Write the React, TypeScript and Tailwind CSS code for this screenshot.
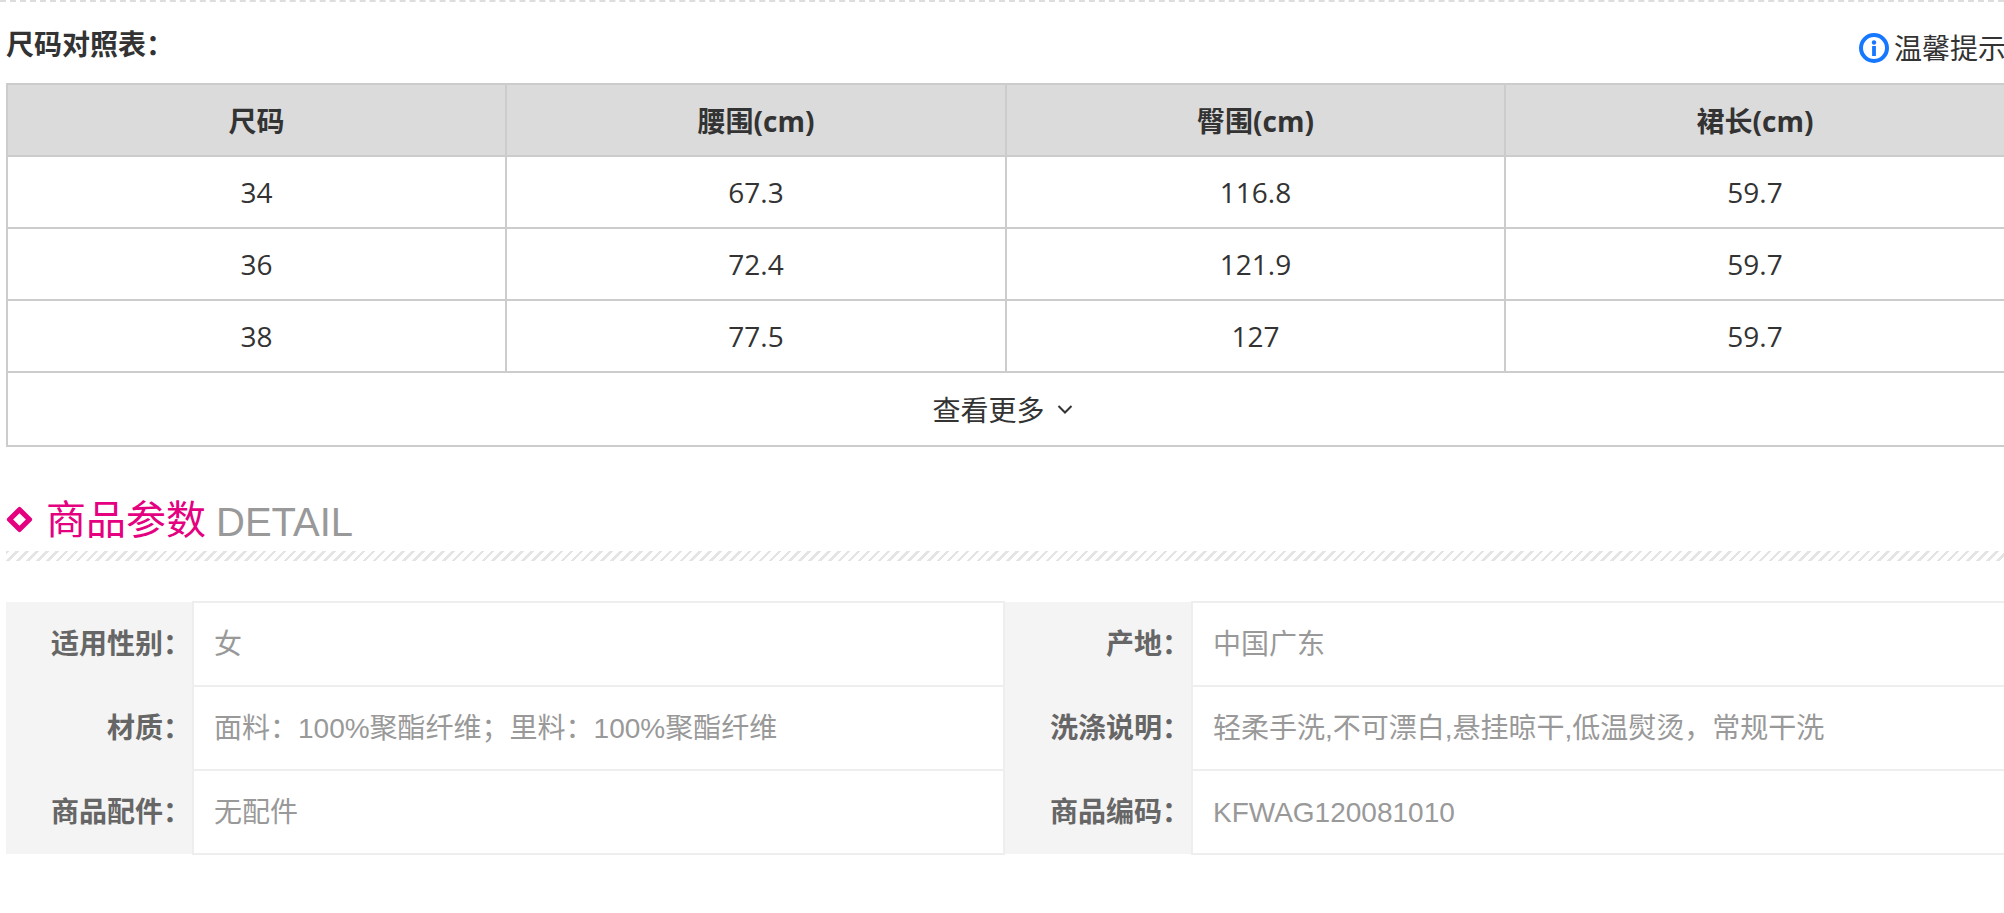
import React from 'react';

const sizeRows = [
  ['34', '67.3', '116.8', '59.7'],
  ['36', '72.4', '121.9', '59.7'],
  ['38', '77.5', '127', '59.7'],
];

const params = [
  ['适用性别：', '女', '产地：', '中国广东'],
  ['材质：', '面料：100%聚酯纤维；里料：100%聚酯纤维', '洗涤说明：', '轻柔手洗,不可漂白,悬挂晾干,低温熨烫，常规干洗'],
  ['商品配件：', '无配件', '商品编码：', 'KFWAG120081010'],
];

function InfoIcon() {
  return (
    <svg width="30" height="30" viewBox="0 0 30 30" className="shrink-0">
      <circle cx="15" cy="15" r="13" fill="none" stroke="#1677ff" strokeWidth="4" />
      <circle cx="15" cy="9.5" r="2.2" fill="#1677ff" />
      <rect x="13.1" y="13" width="3.8" height="10" fill="#1677ff" />
    </svg>
  );
}

function App() {
  return (
    <div className="h-[913px] w-full overflow-hidden bg-white font-['Open_Sans','Noto_Sans_CJK_SC',sans-serif] text-[#333]">
      <div className="h-[2px] border-t-2 border-dashed border-[#ddd]" />
      <div className="ml-[6px] w-[2000px]">
        <div className="flex h-[81px] items-start justify-between">
          <h3 className="mt-[24px] text-[28px] leading-[36px] font-bold">尺码对照表：</h3>
          <div className="mt-[28px] flex items-center gap-[5px] text-[28px] leading-[36px] whitespace-nowrap">
            <InfoIcon />
            <span>温馨提示</span>
          </div>
        </div>

        <table className="w-[2000px] table-fixed border-collapse border-2 border-[#ccc] text-center text-[28px]">
          <colgroup>
            <col className="w-[499px]" />
            <col className="w-[500px]" />
            <col className="w-[499px]" />
            <col />
          </colgroup>
          <thead>
            <tr className="h-[72px] bg-[#dbdbdb] font-bold">
              <th className="border-2 border-[#ccc] pt-[2px]">尺码</th>
              <th className="border-2 border-[#ccc] pt-[2px]">腰围(cm)</th>
              <th className="border-2 border-[#ccc] pt-[2px]">臀围(cm)</th>
              <th className="border-2 border-[#ccc] pt-[2px]">裙长(cm)</th>
            </tr>
          </thead>
          <tbody>
            {sizeRows.map((row) => (
              <tr key={row[0]} className="h-[72px]">
                {row.map((cell, i) => (
                  <td key={i} className="border-2 border-[#ccc]">{cell}</td>
                ))}
              </tr>
            ))}
            <tr className="h-[74px]">
              <td colSpan={4} className="border-2 border-[#ccc] pt-[1px]">
                <span className="inline-flex items-center gap-[12px] pr-[7px]">
                  查看更多
                  <svg width="16" height="11" viewBox="0 0 16 11" fill="none" stroke="#333" strokeWidth="2">
                    <path d="M1.5 2 8 8.5 14.5 2" />
                  </svg>
                </span>
              </td>
            </tr>
          </tbody>
        </table>

        <div className="mt-[47px] flex h-[56px] items-center font-['Liberation_Sans','Noto_Sans_CJK_SC',sans-serif]">
          <div className="mb-[6px] ml-[4px] h-[19px] w-[19px] rotate-45 rounded-[2px] border-[5px] border-[#e4007f]" />
          <span className="mb-[5px] ml-[17px] text-[40px] text-[#e4007f]">商品参数</span>
          <span className="ml-[10px] text-[40px] text-[#999]">DETAIL</span>
        </div>
        <div className="mt-[1px] h-[10px] bg-[repeating-linear-gradient(135deg,#e4e4e4_0,#e4e4e4_2.5px,#fff_2.5px,#fff_7px)]" />

        <table className="mt-[40px] w-[2000px] table-fixed border-collapse font-['Liberation_Sans','Noto_Sans_CJK_SC',sans-serif] text-[28px]">
          <colgroup>
            <col className="w-[187px]" />
            <col className="w-[811px]" />
            <col className="w-[188px]" />
            <col />
          </colgroup>
          <tbody>
            {params.map((row) => (
              <tr key={row[0]} className="h-[84px]">
                <th className="bg-[#f4f4f4] pt-[1px] pr-[1px] text-right font-bold text-[#666]">{row[0]}</th>
                <td className="border-2 border-[#eee] pt-[1px] pl-[20px] text-[#999]">{row[1]}</td>
                <th className="bg-[#f4f4f4] pt-[1px] pr-[1px] text-right font-bold text-[#666]">{row[2]}</th>
                <td className="border-2 border-[#eee] pt-[1px] pl-[20px] text-[#999]">{row[3]}</td>
              </tr>
            ))}
          </tbody>
        </table>
      </div>
    </div>
  );
}

export default App;
